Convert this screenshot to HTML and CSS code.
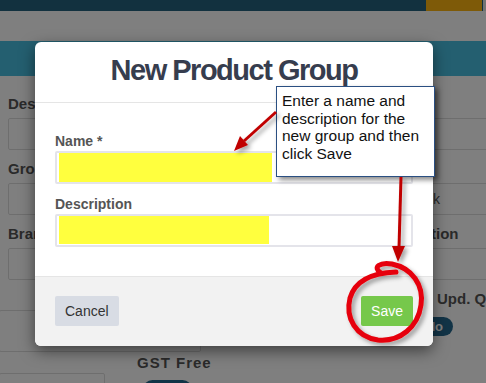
FILE: index.html
```html
<!DOCTYPE html>
<html lang="en">
<head>
  <meta charset="UTF-8">
  <title>New Product Group</title>
  <meta name="viewport" content="width=device-width, initial-scale=1">
  <link rel="stylesheet" href="styles.css">
</head>
<body>

  <!-- page behind the dialog -->
  <div class="page">
    <div class="topbar">
      <div class="topbar-fill"></div>
      <div class="topbar-accent"></div>
      <div class="topbar-end"></div>
    </div>
    <div class="subbar"></div>
    <div class="banner"></div>

    <div class="form">
      <div class="form-col col-a">
        <div class="field"><label>Description</label><div class="box"></div></div>
        <div class="field"><label>Group</label><div class="box"></div></div>
        <div class="field"><label>Brand</label><div class="box"></div></div>
        <div class="box box-wide"></div>
        <div class="box box-low"></div>
      </div>
      <div class="form-col col-b">
        <div class="field"><label>Code</label><div class="box"></div></div>
        <div class="field"><label>Supplier</label><div class="box"></div></div>
        <div class="field"><label>Unit</label><div class="box"></div></div>
        <label class="gst">GST Free</label>
        <div class="pill pill-wide">No</div>
      </div>
      <div class="form-col col-c">
        <div class="field"><label>&nbsp;</label><div class="box"></div></div>
        <div class="field"><label>&nbsp;</label><div class="box box-text">Stock</div></div>
        <div class="field"><label>Location</label><div class="box"></div></div>
        <label class="upd">Upd. Qty</label>
        <div class="pill">No</div>
      </div>
    </div>
  </div>

  <div class="backdrop"></div>

  <!-- dialog -->
  <div class="modal">
    <div class="modal-header">
      <h2 class="modal-title">New Product Group</h2>
    </div>
    <div class="modal-body">
      <label class="modal-label">Name *</label>
      <div class="modal-input"><span class="mark mark-name"></span></div>
      <label class="modal-label modal-label-next">Description</label>
      <div class="modal-input"><span class="mark mark-desc"></span></div>
    </div>
    <div class="modal-footer">
      <button class="btn btn-cancel">Cancel</button>
      <button class="btn btn-save">Save</button>
    </div>
  </div>

  <!-- annotations on top of the screenshot -->
  <div class="callout">Enter a name and description for the new group and then click Save</div>

  <svg class="marks" width="486" height="383" viewBox="0 0 486 383">
    <defs>
      <filter id="drop" x="-20%" y="-20%" width="140%" height="140%">
        <feDropShadow dx="3" dy="3" stdDeviation="2" flood-color="#000" flood-opacity="0.35"/>
      </filter>
    </defs>
    <g filter="url(#drop)" fill="#c00000" stroke="#c00000">
      <line x1="276" y1="112" x2="244" y2="141" stroke-width="3"/>
      <polygon points="234,151 248,145 240,136" stroke="none"/>
      <line x1="401" y1="177" x2="399" y2="248" stroke-width="3"/>
      <polygon points="398,262 392,246 405,246" stroke="none"/>
    </g>
    <path filter="url(#drop)" fill="none" stroke="#e6000a" stroke-width="5" stroke-linecap="round"
      d="M381 273 C372 267, 380 262, 392 264 C412 268, 424 285, 421 305 C418 327, 400 342, 378 340 C356 337, 345 318, 350 298 C355 281, 370 273, 396 272"/>
  </svg>

</body>
</html>
```

FILE: styles.css
```css
html, body {
  margin: 0;
  padding: 0;
}

body {
  width: 486px;
  height: 383px;
  overflow: hidden;
  position: relative;
  font-family: "Liberation Sans", Arial, sans-serif;
  background-color: #fff;
}

/* ---- background page ---- */
.page {
  width: 486px;
  height: 383px;
  overflow: hidden;
}

.topbar {
  display: flex;
  height: 11px;
  background-color: #25627f;
}
.topbar-fill {
  flex: 1;
}
.topbar-accent {
  width: 56px;
  background-color: #fcb410;
}
.topbar-end {
  width: 3px;
  background-color: #e8e8e8;
  border-left: 1px solid #25627f;
}

.subbar {
  height: 30px;
  background-color: #fff;
}

.banner {
  height: 35px;
  background-color: #49bee0;
}

.form {
  display: flex;
  gap: 9px;
  padding: 19px 0 0 8px;
}
.form-col {
  display: flex;
  flex-direction: column;
  flex-shrink: 0;
}
.col-a { width: 120px; }
.col-b { width: 250px; }
.col-c { width: 160px; }

.form label {
  display: block;
  height: 18px;
  line-height: 18px;
  margin-bottom: 5px;
  font-size: 15px;
  font-weight: bold;
  color: #555;
  white-space: nowrap;
}

.field {
  margin-bottom: 10px;
}

.box {
  height: 30px;
  border: 1px solid #ddd;
  border-radius: 2px;
}
.box-text {
  padding-left: 8px;
  line-height: 30px;
  font-size: 14px;
  color: #555;
}
.box-wide {
  margin: 20px 0 0 -9px;
  width: 200px;
  height: 40px;
}
.box-low {
  margin: 21px 0 0 -9px;
  width: 104px;
  height: 30px;
}

.form .gst {
  margin: 64px 0 8px;
  letter-spacing: 1px;
}
.form .upd {
  margin: 0 0 9px;
  padding-left: 41px;
}

.pill {
  width: 43px;
  height: 19px;
  margin-left: 14px;
  padding-right: 10px;
  box-sizing: border-box;
  border-radius: 10px;
  background-color: #24688f;
  color: #fff;
  font-size: 13px;
  font-weight: bold;
  line-height: 19px;
  text-align: right;
}
.pill-wide {
  width: 49px;
  margin-left: 6px;
}

.backdrop {
  position: absolute;
  top: 0;
  left: 0;
  right: 0;
  bottom: 0;
  background-color: rgba(0, 0, 0, 0.5);
}

/* ---- dialog ---- */
.modal {
  position: absolute;
  top: 42px;
  left: 35px;
  width: 398px;
  background-color: #fff;
  border-radius: 6px;
  box-shadow: 0 5px 15px rgba(0, 0, 0, 0.5);
  overflow: hidden;
}

.modal-header {
  height: 61px;
  padding-top: 11px;
  box-sizing: border-box;
  border-bottom: 1px solid #e5e5e5;
  text-align: center;
}
.modal-title {
  margin: 0;
  font-size: 29px;
  line-height: 34px;
  letter-spacing: -1.5px;
  color: #363d4e;
}

.modal-body {
  padding: 29px 20px 29px;
}
.modal-label {
  display: block;
  height: 18px;
  line-height: 18px;
  margin-bottom: 1px;
  font-size: 14px;
  font-weight: bold;
  color: #555;
}
.modal-label-next {
  margin-top: 11px;
}
.modal-input {
  height: 33px;
  box-sizing: border-box;
  border: 2px solid #e4e4ea;
  border-radius: 2px;
  padding: 0 0 0 2px;
  display: flex;
  align-items: stretch;
}
.mark {
  display: block;
  background-color: #ffff3e;
}
.mark-name {
  width: 213px;
}
.mark-desc {
  width: 210px;
  margin: 0 0 1px;
}

.modal-footer {
  display: flex;
  justify-content: space-between;
  padding: 19px 20px 20px;
  border-top: 1px solid #e5e5e5;
  background-color: #f2f2f2;
}

.btn {
  height: 30px;
  border: 0;
  border-radius: 2px;
  padding: 0 10px;
  font-family: "Liberation Sans", Arial, sans-serif;
  font-size: 14px;
  cursor: pointer;
}
.btn-cancel {
  background-color: #d8dce4;
  color: #333;
}
.btn-save {
  background-color: #76c84b;
  color: #fff;
}

/* ---- annotations ---- */
.callout {
  position: absolute;
  top: 86px;
  left: 276px;
  width: 148px;
  height: 81px;
  padding: 5px 4px 3px 5px;
  background-color: #fff;
  border: 1px solid #2a4f82;
  box-shadow: 3px 3px 5px rgba(0, 0, 0, 0.45);
  font-size: 15.5px;
  line-height: 17.7px;
  color: #111;
}

.marks {
  position: absolute;
  top: 0;
  left: 0;
  pointer-events: none;
}
```
